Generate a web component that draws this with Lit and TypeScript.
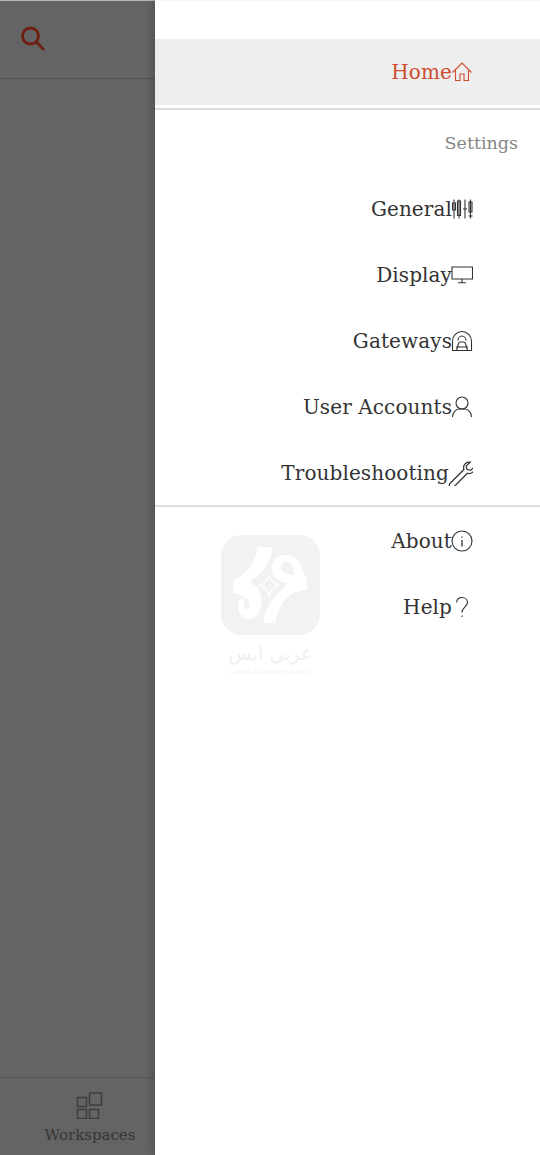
import { LitElement, html, css, svg } from "lit";
import { customElement } from "lit/decorators.js";

const I = (c: unknown, cls = "") => html`<svg class="icon ${cls}" viewBox="0 0 22 22" fill="none" stroke="currentColor" stroke-width="1.1">${c}</svg>`;

const icons: Record<string, unknown> = {
  home: svg`<path d="M1.500 11.500 11 2l9.500 9.500M4.500 9v10.500h4.500V13h4v6.500h4.500V9"/>`,
  general: svg`<path d="M3 1.500v19M1.500 5h3v7h-3zM8.500 3h-2v14.500h3V3zM8 1.500v19M14 1.500v19M12 11h4M19.500 1.500v19M18 4h3v10h-3zM17.500 18h4"/>`,
  display: svg`<path d="M1 3h20.500v12H1zM11 15v3.500M7 18.800h8"/>`,
  gateway: svg`<path d="M1.500 20.500V11a9.500 9.500 0 0 1 19 0v9.500zM5.500 20.500l2-7c.3-1 1-1.500 2-1.500h3c1 0 1.700.5 2 1.500l2 7M7 10.500a4 4.500 0 1 1 8 0M5 17h12"/>`,
  user: svg`<circle cx="11" cy="7" r="6"/><path d="M1.500 21c0-4.500 3.500-8 6.500-8h6c3 0 6.500 3.500 6.500 8"/>`,
  wrench: svg`<path d="M1.500 20 14 7.500c-1.200-3.500 1.500-7 5.500-6.500l-3.500 3.500.8 3 3 .8L23.500 5c.5 4-3 7.200-6.500 5.800L4.500 23.500c-2.500 1-4-1-3-3.500z"/>`,
  info: svg`<circle cx="11" cy="11" r="10"/><path d="M11 10v6.500M11 6.500v1.300" stroke-width="1.300"/>`,
  help: svg`<path d="M5.500 6.500C6 3 8.500 1.500 11 1.500c3 0 5.500 2 5.500 5 0 4-5.500 5-5.500 10M11 19.500v1.500"/>`,
};

const rows = [
  { label: "General", icon: "general" },
  { label: "Display", icon: "display" },
  { label: "Gateways", icon: "gateway" },
  { label: "User Accounts", icon: "user" },
  { label: "Troubleshooting", icon: "wrench", cls: "wide" },
];

@customElement("app-root")
export class AppRoot extends LitElement {
  static styles = css`
    :host {
      display: grid;
      grid-template-columns: 155px 1fr;
      width: 540px;
      height: 1155px;
      overflow: hidden;
      font-family: "DejaVu Serif", "Liberation Serif", serif;
      background: #fff;
      position: relative;
    }
    .left {
      display: flex;
      flex-direction: column;
      background: #646464;
      border-top: 1px solid #b5b5b5;
      min-height: 0;
    }
    .top {
      height: 77px;
      border-bottom: 1px solid #525252;
      display: flex;
      align-items: center;
      padding-left: 20px;
    }
    .top svg { width: 25px; height: 26px; margin-top: -1px; }
    .spacer { flex: 1; }
    .bottom {
      height: 78px;
      border-top: 1px solid #555;
      display: flex;
      flex-direction: column;
      align-items: center;
      padding-top: 14px;
      box-sizing: border-box;
      width: 180px;
      flex: none;
      color: #353535;
      font-size: 15px;
      line-height: 20px;
      gap: 6px;
    }
    .bottom svg { width: 28px; height: 27px; display: block; }
    .drawer {
      position: relative;
      background: #fff;
      box-shadow: 0 0 10px rgba(0, 0, 0, 0.3);
      display: flex;
      flex-direction: column;
      padding-top: 38px;
      border-top: 1px solid #f6f6f6;
      box-sizing: border-box;
      clip-path: inset(0 0 0 -14px);
    }
    .row {
      height: 66px;
      flex: none;
      display: flex;
      align-items: center;
      justify-content: flex-end;
      padding-right: 67px;
      color: #333;
      font-size: 20px;
      letter-spacing: 0.1px;
      position: relative;
    }
    .row span { margin-right: -1px; }
    .row.active {
      background: #eee;
      color: #d04c2e;
    }
    .icon { width: 22px; height: 22px; flex: none; }
    .icon.wide { width: 25px; height: 25px; }
    .rule { height: 2px; background: #ddd; flex: none; }
    .rule.first { margin-top: 3px; }
    .rule.mid { margin-top: -1px; margin-bottom: 1px; }
    .head {
      height: 66px;
      flex: none;
      display: flex;
      align-items: center;
      justify-content: flex-end;
      padding-right: 22px;
      color: #858585;
      font-size: 17.500px;
    }
    .watermark {
      position: absolute;
      left: 66px;
      top: 534px;
      width: 99px;
      display: flex;
      flex-direction: column;
      align-items: center;
      color: #f0f0f0;
    }
    .mark { width: 99px; height: 100px; display: block; }
    .ar { font-family: "DejaVu Sans", sans-serif; font-size: 19px; line-height: 24px; margin-top: 6px; white-space: nowrap; direction: rtl; }
    .url { font-family: "Liberation Sans", sans-serif; font-size: 8px; line-height: 10px; letter-spacing: 0.6px; margin-top: 2px; white-space: nowrap; color: #f3f3f3; }
  `;

  render() {
    return html`
      <div class="left">
        <div class="top">
          <svg viewBox="0 0 25 26" fill="none" stroke="#6e1f10" stroke-width="2.800">
            <circle cx="10.500" cy="10" r="8"/>
            <path d="M16.500 16 24 24"/>
          </svg>
        </div>
        <div class="spacer"></div>
        <div class="bottom">
          <svg viewBox="0 0 28 27" fill="none" stroke="#3d3d3d" stroke-width="1.500">
            <path d="M1 5.500h9v9H1zM13 1h12v12H13zM1 17.500h9v9H1zM13 17.500h9v9h-9z" transform="translate(.5 0)"/>
          </svg>
          <span>Workspaces</span>
        </div>
      </div>
      <div class="drawer">
        <div class="row active"><span>Home</span>${I(icons.home)}</div>
        <div class="rule first"></div>
        <div class="head">Settings</div>
        ${rows.map((r) => html`<div class="row"><span>${r.label}</span>${I(icons[r.icon], r.cls ?? "")}</div>`)}
        <div class="rule mid"></div>
        <div class="row"><span>About</span>${I(icons.info)}</div>
        <div class="row"><span>Help</span>${I(icons.help)}</div>
        <div class="watermark">
          <svg class="mark" viewBox="-12 -15 297 300">
            <rect x="-12" y="-15" width="297" height="300" rx="62" fill="#f2f2f2"/>
            <path fill="#fff" d="M97 22H143C140 60 120 95 75 125C100 140 115 165 108 195C104 225 80 243 62 238C42 232 35 205 42 180L60 170C52 195 60 212 68 208C78 204 76 182 58 170C48 165 35 160 25 160V122C65 100 92 70 97 22Z"/>
            <path fill="#fff" fill-rule="evenodd" d="M180 45C210 45 228 65 232 90C234 100 238 106 245 110V150C210 150 185 170 170 195C158 215 152 232 150 250H115C120 205 140 175 170 150C178 143 184 135 186 128C160 128 142 112 140 90C138 65 155 45 180 45ZM180 65C168 68 163 82 170 92C178 100 192 104 208 104C204 92 204 80 198 72C193 66 187 63 180 65Z"/>
            <path fill="none" stroke="#fff" stroke-width="4" d="M133 106C136 120 146 130 160 136C146 141 136 150 132 166C128 150 118 141 106 136C118 130 129 120 133 106Z"/>
          </svg>
          <div class="ar">عربي ابس</div>
          <div class="url">www.ArabiApps.net</div>
        </div>
      </div>
    `;
  }
}
